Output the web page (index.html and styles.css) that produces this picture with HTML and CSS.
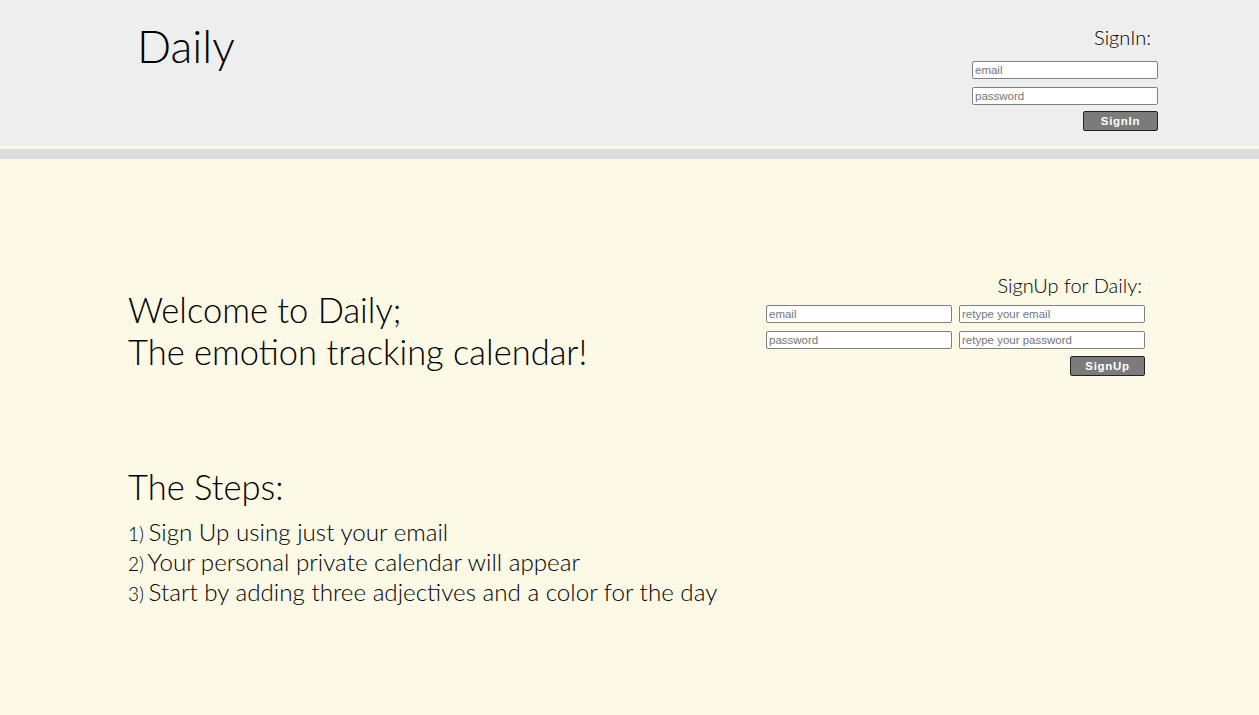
FILE: index.html
```html
<!DOCTYPE html>
<html>
<head>
<meta charset="utf-8">
<title>Daily</title>
<link rel="stylesheet" href="styles.css">
</head>
<body>
<header class="top">
  <h1 class="logo">Daily</h1>
  <form class="signin">
    <div class="form-label">SignIn:</div>
    <input class="field" type="text" placeholder="email">
    <input class="field" type="password" placeholder="password">
    <button class="btn" type="button">SignIn</button>
  </form>
</header>
<div class="divider"></div>
<main class="main">
  <section class="hero">
    <h2 class="welcome">Welcome to Daily;<br>The emotion tracking calendar!</h2>
    <form class="signup">
      <div class="form-label signup-label">SignUp for Daily:</div>
      <div class="grid">
        <input class="field" type="text" placeholder="email">
        <input class="field" type="text" placeholder="retype your email">
        <input class="field" type="password" placeholder="password">
        <input class="field" type="password" placeholder="retype your password">
      </div>
      <button class="btn" type="button">SignUp</button>
    </form>
  </section>
  <section class="steps">
    <h2 class="steps-title">The Steps:</h2>
    <ol class="steps-list">
      <li><span class="num">1)</span> Sign Up using just your email</li>
      <li><span class="num">2)</span> Your personal private calendar will appear</li>
      <li><span class="num">3)</span> Start by adding three adjectives and a color for the day</li>
    </ol>
  </section>
</main>
</body>
</html>
```

FILE: styles.css
```css
html, body {
  margin: 0;
  padding: 0;
}
body {
  background: #fcf9e6;
  font-family: Lato, "Open Sans", sans-serif;
  font-weight: 300;
  color: #000;
  min-height: 715px;
}
.top {
  background: #eeeeee;
  height: 146px;
  display: flex;
  justify-content: space-between;
  align-items: flex-start;
  padding: 0 101px 0 137px;
  box-sizing: border-box;
}
.logo {
  margin: 19px 0 0 0;
  font-size: 45px;
  line-height: 54px;
  font-weight: 300;
}
.divider {
  height: 10px;
  background: #dddddd;
  margin-top: 3px;
}
.signin {
  width: 186px;
  margin-top: 25px;
  display: flex;
  flex-direction: column;
  align-items: flex-end;
}
.form-label {
  font-size: 20px;
  line-height: 25px;
  font-weight: 300;
  margin-right: 7px;
  margin-bottom: 11px;
}
.field {
  box-sizing: border-box;
  width: 186px;
  height: 18px;
  border: 1px solid #808080;
  border-radius: 2px;
  background: #fff;
  padding: 0 2px;
  font-family: "Liberation Sans", Arial, sans-serif;
  font-size: 11.5px;
  color: #333;
  outline: none;
}
.field::placeholder {
  color: #767676;
}
.signin .field {
  margin-bottom: 8px;
}
.signin .field:nth-of-type(2) {
  margin-bottom: 6px;
}
.btn {
  box-sizing: border-box;
  width: 75px;
  height: 20px;
  background: #7b7b7b;
  border: 1px solid #222;
  border-radius: 2px;
  color: #fff;
  font-family: "Liberation Sans", Arial, sans-serif;
  font-weight: bold;
  font-size: 11.5px;
  letter-spacing: 0.7px;
  padding: 0;
  cursor: pointer;
}
.main {
  padding: 114px 114px 0 128px;
}
.hero {
  display: flex;
  justify-content: space-between;
  align-items: flex-start;
}
.welcome {
  margin: 16px 0 0 0;
  font-size: 34.5px;
  line-height: 42px;
  font-weight: 300;
}
.signup {
  width: 379px;
  display: flex;
  flex-direction: column;
  align-items: flex-end;
}
.signup-label {
  margin-right: 3px;
  margin-bottom: 7px;
}
.grid {
  display: grid;
  grid-template-columns: 186px 186px;
  column-gap: 7px;
  row-gap: 8px;
  margin-bottom: 7px;
}
.steps {
  margin-top: 90px;
}
.steps-title {
  margin: 0;
  font-size: 34.5px;
  line-height: 42px;
  font-weight: 300;
}
.steps-list {
  list-style: none;
  margin: 9px 0 0 0;
  padding: 0;
  font-size: 24.2px;
  line-height: 30px;
}
.num {
  font-size: 19px;
  line-height: 1;
  margin-right: -2px;
}
```
